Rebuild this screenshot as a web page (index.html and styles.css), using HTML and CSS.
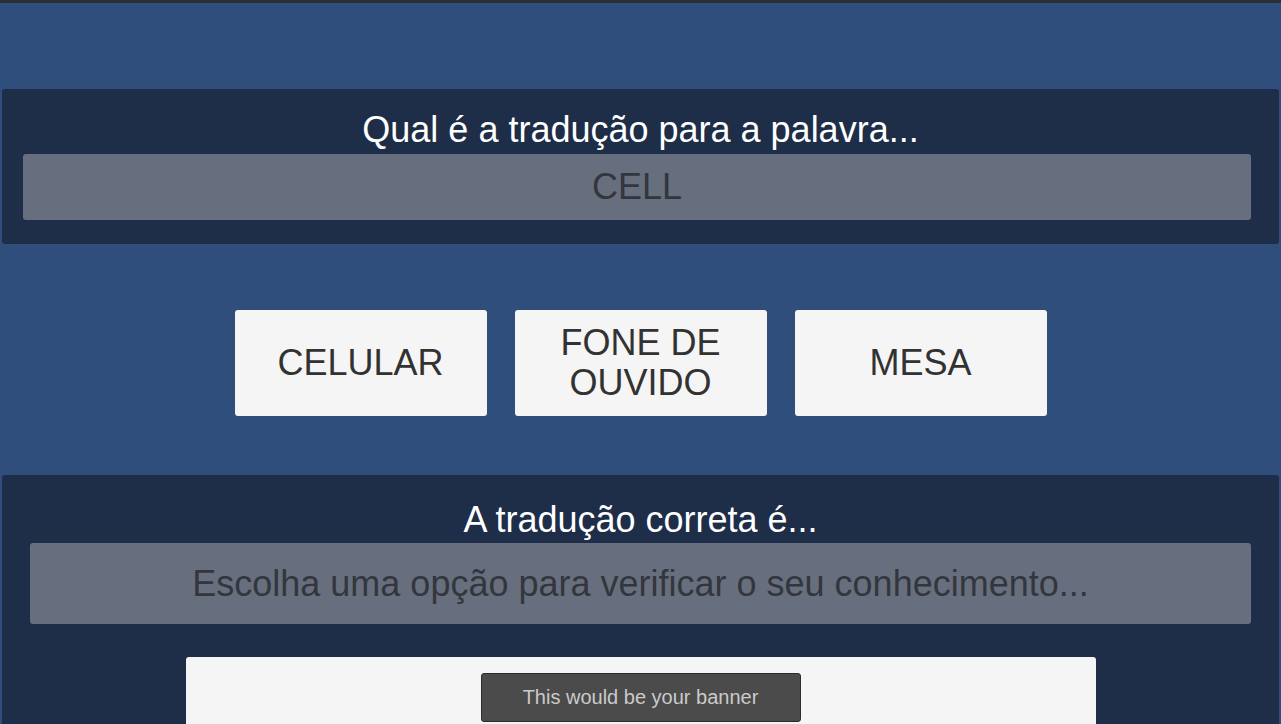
FILE: index.html
```html
<!DOCTYPE html>
<html lang="pt">
<head>
<meta charset="utf-8">
<title>Quiz</title>
<link rel="stylesheet" href="styles.css">
</head>
<body>
<div class="screen">
  <section class="panel question">
    <h1 class="title">Qual é a tradução para a palavra...</h1>
    <div class="word">CELL</div>
  </section>
  <div class="options">
    <button class="option">CELULAR</button>
    <button class="option">FONE DE<br>OUVIDO</button>
    <button class="option">MESA</button>
  </div>
  <section class="panel answer">
    <h2 class="title">A tradução correta é...</h2>
    <div class="feedback">Escolha uma opção para verificar o seu conhecimento...</div>
    <div class="banner-area">
      <div class="banner">This would be your banner</div>
    </div>
  </section>
</div>
</body>
</html>
```

FILE: styles.css
```css
* { box-sizing: border-box; }
html, body {
  margin: 0;
  padding: 0;
  background: #2f4e7b;
}
.screen {
  width: 1281px;
  height: 724px;
  overflow: hidden;
  border-top: 3px solid #2b2e35;
  padding: 86px 2px 0;
  display: flex;
  flex-direction: column;
  font-family: "Liberation Sans", Arial, sans-serif;
  background: #2f4e7b;
}
.panel {
  background: #1e2d48;
  border-radius: 3px;
}
.title {
  margin: 0;
  font-size: 36px;
  font-weight: normal;
  line-height: 40px;
  color: #ffffff;
  text-align: center;
}
.question {
  height: 155px;
  padding: 21px 28px 0;
}
.question .title {
  margin-bottom: 4px;
}
.word {
  margin-left: -7px;
  height: 66px;
  background: #676f7e;
  border-radius: 3px;
  color: #33363c;
  font-size: 36px;
  display: flex;
  align-items: center;
  justify-content: center;
}
.options {
  display: flex;
  justify-content: center;
  gap: 28px;
  margin: 66px 0 59px;
}
.option {
  width: 252px;
  height: 106px;
  border: none;
  border-radius: 3px;
  background: #f5f5f5;
  color: #323232;
  font-family: "Liberation Sans", Arial, sans-serif;
  font-size: 36px;
  line-height: 40px;
  padding: 0;
}
.answer {
  flex: 1;
  padding: 25px 28px 0;
  border-radius: 3px 3px 0 0;
}
.answer .title {
  margin-bottom: 3px;
}
.feedback {
  height: 81px;
  background: #676f7e;
  border-radius: 3px;
  color: #33363c;
  font-size: 36px;
  display: flex;
  align-items: center;
  justify-content: center;
}
.banner-area {
  width: 910px;
  height: 67px;
  margin: 33px auto 0;
  padding-top: 16px;
  background: #f5f5f5;
  border-radius: 3px 3px 0 0;
  display: flex;
  justify-content: center;
}
.banner {
  width: 320px;
  height: 49px;
  background: #4b4b4b;
  border: 1px solid #2c2c2c;
  border-radius: 3px;
  color: #cacaca;
  font-size: 20px;
  display: flex;
  align-items: center;
  justify-content: center;
}
```
